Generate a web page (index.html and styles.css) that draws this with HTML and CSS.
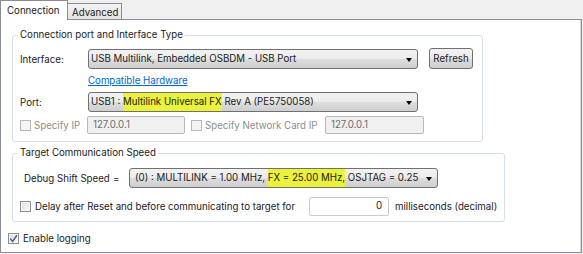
FILE: index.html
```html
<!DOCTYPE html>
<html>
<head>
<meta charset="utf-8">
<link rel="stylesheet" href="styles.css">
</head>
<body>
<div class="tabs">
  <div class="tab tab-active">Connection</div>
  <div class="tab tab-inactive">Advanced</div>
</div>
<div class="panel">
  <fieldset class="group group-conn">
    <legend>Connection port and Interface Type</legend>
    <div class="row row-iface">
      <span class="label">Interface:</span>
      <div class="dd dd-wide"><span class="dd-text">USB Multilink, Embedded OSBDM - USB Port</span><span class="arrow"></span></div>
      <div class="btn">Refresh</div>
    </div>
    <div class="row row-link">
      <span class="label"></span>
      <a class="link">Compatible Hardware</a>
    </div>
    <div class="row row-port">
      <span class="label">Port:</span>
      <div class="dd dd-wide"><span class="dd-text">USB1 : <span class="hl">Multilink Universal FX</span> Rev A (PE5750058)</span><span class="arrow"></span></div>
    </div>
    <div class="row row-ip">
      <span class="chk chk-dis"></span><span class="dis-label lbl-ip">Specify IP</span>
      <div class="inp inp-dis inp-ip1">127.0.0.1</div>
      <span class="chk chk-dis"></span><span class="dis-label lbl-net">Specify Network Card IP</span>
      <div class="inp inp-dis inp-ip2">127.0.0.1</div>
    </div>
  </fieldset>
  <fieldset class="group group-speed">
    <legend>Target Communication Speed</legend>
    <div class="row row-debug">
      <span class="lbl-debug">Debug Shift Speed</span>
      <span class="eq">=</span>
      <div class="dd dd-speed"><span class="dd-text">(0) : MULTILINK = 1.00 MHz, <span class="hl">FX = 25.00 MHz,</span> OSJTAG = 0.25 MHz</span><span class="arrow"></span></div>
    </div>
    <div class="row row-delay">
      <span class="chk"></span><span class="lbl-delay">Delay after Reset and before communicating to target for</span>
      <div class="inp inp-num">0</div>
      <span class="lbl-ms">milliseconds (decimal)</span>
    </div>
  </fieldset>
  <div class="row row-log">
    <span class="chk chk-on"><svg width="9" height="9" viewBox="0 0 9 9"><path d="M1.2 4.6 L3.6 7.4 L7.9 1.2" fill="none" stroke="#4a64a0" stroke-width="1.5"/></svg></span>
    <span class="lbl-log">Enable logging</span>
  </div>
</div>
</body>
</html>
```
FILE: styles.css
```css
* { box-sizing: border-box; }
body {
  margin: 0;
  background: #f0f0f0;
  font-family: Inter, Lato, sans-serif;
  font-size: 9.7px;
  color: #1b1b1b;
  width: 583px;
  height: 254px;
  overflow: hidden;
  white-space: nowrap;
}
.tabs {
  display: flex;
  height: 19px;
  align-items: flex-end;
}
.tab-active {
  background: #fff;
  width: 68px;
  height: 20px;
  border: 1px solid #898c95;
  border-bottom: none;
  padding: 2px 0 0 6px;
  line-height: 15px;
  position: relative;
  z-index: 1;
  margin-bottom: -1px;
}
.tab-inactive {
  width: 54px;
  height: 16px;
  border: 1px solid #898c95;
  border-left: none;
  border-bottom: none;
  background: linear-gradient(#f4f4f4, #e2e2e2);
  padding: 1px 0 0 4px;
  line-height: 15px;
}
.panel {
  width: 582px;
  height: 234px;
  background: #fff;
  border: 1px solid #898c95;
  box-shadow: inset -1px 0 0 #dcdcdc;
}
.group {
  border: 1px solid #d5dfe5;
  border-radius: 3px;
  margin: 0 0 0 11px;
  padding: 0 6px 0 7px;
  min-width: 0;
}
.group legend {
  padding: 0 2px;
  margin-left: -2px;
  line-height: 16px;
  height: 16px;
}
.group-conn {
  margin-top: 7px;
  width: 471px;
  height: 115px;
}
.group-speed {
  margin-top: 3px;
  width: 493px;
  height: 77px;
}
.row {
  display: flex;
  align-items: center;
}
.label { width: 68px; flex: none; }
.row-iface { margin-top: 6px; height: 20px; }
.row-link { height: 22px; }
.row-port { margin-top: 1px; height: 20px; }
.row-ip { margin-top: 4px; height: 18px; }
.dd {
  height: 20px;
  border: 1px solid #707070;
  border-radius: 3px;
  background: linear-gradient(#f2f2f2 0%, #ebebeb 50%, #dddddd 51%, #cfcfcf 100%);
  display: flex;
  align-items: center;
  padding-left: 2px;
  overflow: hidden;
  flex: none;
}
.dd-text { flex: 1; overflow: hidden; line-height: 18px; }
.arrow {
  flex: none;
  width: 0; height: 0;
  border-left: 3.5px solid transparent;
  border-right: 3.5px solid transparent;
  border-top: 4px solid #000;
  margin: 1px 5px 0 7px;
}
.dd-wide { width: 330px; }
.hl { background: #eaf23c; display: inline-block; line-height: 18px; }
.btn {
  margin-left: 11px;
  margin-top: -1px;
  width: 44px;
  height: 21px;
  border: 1px solid #707070;
  border-radius: 3px;
  background: linear-gradient(#f2f2f2 0%, #ebebeb 50%, #dddddd 51%, #cfcfcf 100%);
  text-align: center;
  line-height: 19px;
}
.link { color: #0066cc; text-decoration: underline; }
.chk {
  width: 11px;
  height: 11px;
  flex: none;
  border: 1px solid #8f8f8f;
  background: linear-gradient(135deg, #dcdcdc, #fdfdfd);
  box-shadow: inset 0 0 0 1px #f4f4f4;
  display: flex;
  align-items: center;
  justify-content: center;
}
.chk-dis { border-color: #b8b8b8; background: #f4f4f4; }
.dis-label { color: #8d8d8d; margin-left: 3px; flex: none; }
.lbl-ip { width: 53px; }
.lbl-net { width: 120px; }
.inp {
  height: 18px;
  border: 1px solid #abadb3;
  border-radius: 2px;
  padding: 0 5px;
  line-height: 16px;
  flex: none;
}
.inp-dis { background: #f0f0f0; border-color: #b8b8b8; color: #6d6d6d; }
.inp-ip1 { width: 98px; margin-right: 6px; }
.inp-ip2 { width: 99px; }
.row-debug { margin-top: 7px; height: 20px; padding-left: 4px; }
.lbl-debug { width: 89px; flex: none; }
.eq { width: 16px; flex: none; }
.dd-speed { width: 309px; padding-left: 5px; }
.row-delay { margin-top: 9px; height: 19px; }
.lbl-delay { margin-left: 4px; width: 274px; flex: none; }
.inp-num { width: 80px; height: 19px; text-align: right; padding-right: 6px; background: #fff; border-color: #c9cbd0; }
.lbl-ms { margin-left: 6px; }
.row-log { margin: 8px 0 0 7px; height: 16px; }
.lbl-log { margin-left: 4px; }
```
